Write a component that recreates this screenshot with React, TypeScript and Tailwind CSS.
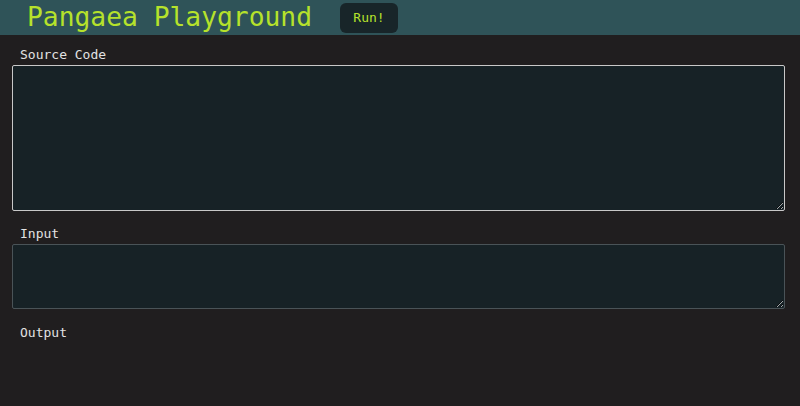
const mono = { fontFamily: '"DejaVu Sans Mono", "Liberation Mono", monospace' }

const App = () => {
  return (
    <div className="min-h-[406px] w-full bg-[#201e1f]" style={mono}>
      <header className="flex h-[35px] items-center bg-[#2f5358] pl-[27px]">
        <h1 className="text-[26.3px] leading-none text-[#b6e22b]">Pangaea Playground</h1>
        <button
          type="button"
          className="ml-[28px] h-[30px] w-[58px] rounded-md bg-[#182529] text-[13px] text-[#b6e22b]"
        >Run!</button>
      </header>
      <main className="px-[12px] pr-[15px] pt-[11px]">
        <label className="block pl-[8px] text-[13px] leading-[17px] text-[#e2e2e2]">Source Code</label>
        <textarea
          className="mt-[2px] block h-[146px] w-full resize-y rounded-[2px] border border-[#c8c8c8] bg-[#172226] p-2 text-[13px] text-white outline-none"
        />
        <label className="mt-[14px] block pl-[8px] text-[13px] leading-[17px] text-[#e2e2e2]">Input</label>
        <textarea
          className="mt-[2px] block h-[65px] w-full resize-y rounded-[2px] border border-[#4a5357] bg-[#172226] p-2 text-[13px] text-white outline-none"
        />
        <label className="mt-[15px] block pl-[8px] text-[13px] leading-[17px] text-[#e2e2e2]">Output</label>
      </main>
    </div>
  )
}

export default App
